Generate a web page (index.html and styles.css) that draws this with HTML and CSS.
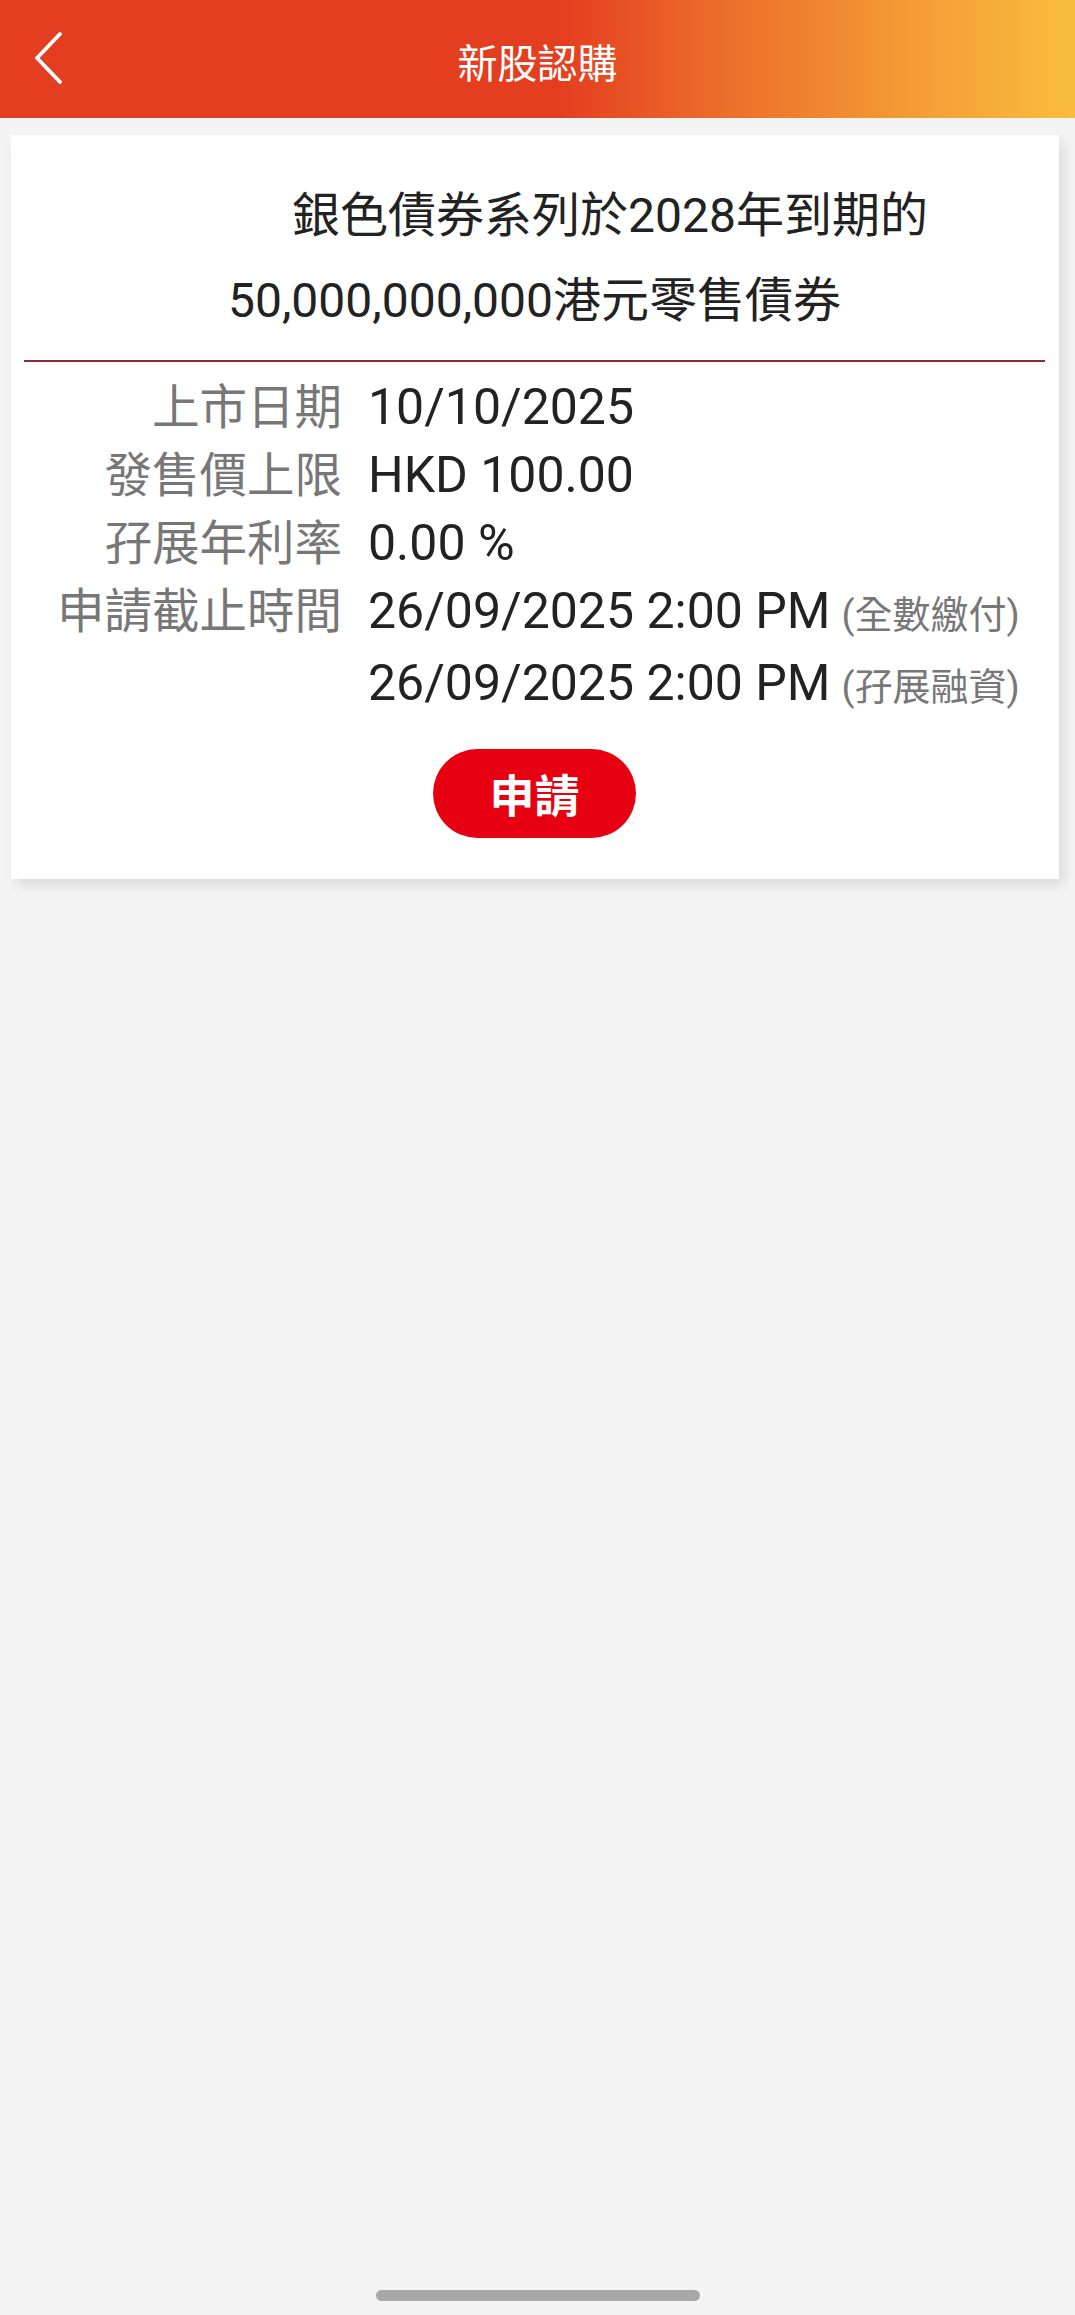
FILE: index.html
```html
<!DOCTYPE html>
<html lang="zh-Hant">
<head>
<meta charset="utf-8">
<title>新股認購</title>
<link rel="stylesheet" href="styles.css">
</head>
<body>
<div class="page">
  <header class="topbar">
    <button class="back" aria-label="返回">
      <svg width="30" height="52" viewBox="0 0 30 52"><polyline points="26,2 3,26 26,50" fill="none" stroke="#fff" stroke-width="3.8" stroke-linecap="round" stroke-linejoin="round"/></svg>
    </button>
    <h1 class="topbar-title">新股認購</h1>
    <span class="spacer"></span>
  </header>

  <main class="card">
    <div class="bond-title">銀色債券系列於2028年到期的<br>50,000,000,000港元零售債券</div>
    <div class="divider"></div>
    <div class="rows">
      <div class="row"><span class="label">上市日期</span><span class="value">10/10/2025</span></div>
      <div class="row"><span class="label">發售價上限</span><span class="value">HKD 100.00</span></div>
      <div class="row"><span class="label">孖展年利率</span><span class="value">0.00 %</span></div>
      <div class="row"><span class="label">申請截止時間</span><span class="value">26/09/2025 2:00 PM<span class="note">(全數繳付)</span></span></div>
      <div class="row row-last"><span class="label"></span><span class="value">26/09/2025 2:00 PM<span class="note">(孖展融資)</span></span></div>
    </div>
    <div class="actions"><button class="apply">申請</button></div>
  </main>

  <footer class="home-area"><span class="home-bar"></span></footer>
</div>
</body>
</html>
```

FILE: styles.css
```css
* { box-sizing: border-box; }
html, body { margin: 0; padding: 0; }
body {
  background: #f4f4f5;
  font-family: Roboto, "Noto Sans CJK TC", "Noto Sans", sans-serif;
  color: #222;
}
.page {
  min-height: 2315px;
  display: flex;
  flex-direction: column;
}
.topbar {
  height: 118px;
  display: grid;
  grid-template-columns: 1fr auto 1fr;
  align-items: center;
  background: linear-gradient(90deg, #e43e20 0%, #e43e20 52%, #ec6a2a 66%, #f39a34 84%, #f9bd3c 100%);
  padding-top: 11px;
}
.back {
  justify-self: start;
  margin-left: 34px;
  margin-top: -14px;
  padding: 0;
  border: 0;
  background: none;
  width: 30px;
  height: 52px;
  display: flex;
}
.topbar-title {
  margin: 0;
  font-size: 40px;
  font-weight: 400;
  color: #fff;
  line-height: 1;
}
.card {
  margin: 17px 16px 0 11px;
  background: #fff;
  padding: 0 14px 41px 13px;
  box-shadow: 5px 7px 12px rgba(0, 0, 0, 0.10);
}
.bond-title {
  padding-top: 38px;
  font-size: 48px;
  line-height: 85px;
  text-align: center;
  text-indent: 151px;
  color: #222;
}
.divider {
  margin-top: 17px;
  height: 2px;
  background: #8e2b35;
}
.rows {
  margin-top: 12px;
}
.row {
  display: grid;
  grid-template-columns: 318px 1fr;
  column-gap: 26px;
  align-items: baseline;
  line-height: 67px;
}
.row-last { margin-top: 4px; }
.label {
  text-align: right;
  font-size: 47.5px;
  color: #777;
}
.value {
  font-size: 50px;
  color: #222;
  white-space: nowrap;
}
.note {
  font-size: 38px;
  line-height: 1;
  color: #777;
  margin-left: 11px;
}
.actions {
  display: flex;
  justify-content: center;
  margin-top: 32px;
}
.apply {
  width: 203px;
  height: 89px;
  border: 0;
  border-radius: 45px;
  background: #e60012;
  color: #fff;
  font-family: Roboto, "Noto Sans CJK TC", sans-serif;
  font-size: 45px;
  font-weight: 700;
  padding: 0;
}
.home-area {
  margin-top: auto;
  display: flex;
  justify-content: center;
  padding-bottom: 14px;
}
.home-bar {
  width: 324px;
  height: 11px;
  border-radius: 6px;
  background: #a8a8a8;
}
```
